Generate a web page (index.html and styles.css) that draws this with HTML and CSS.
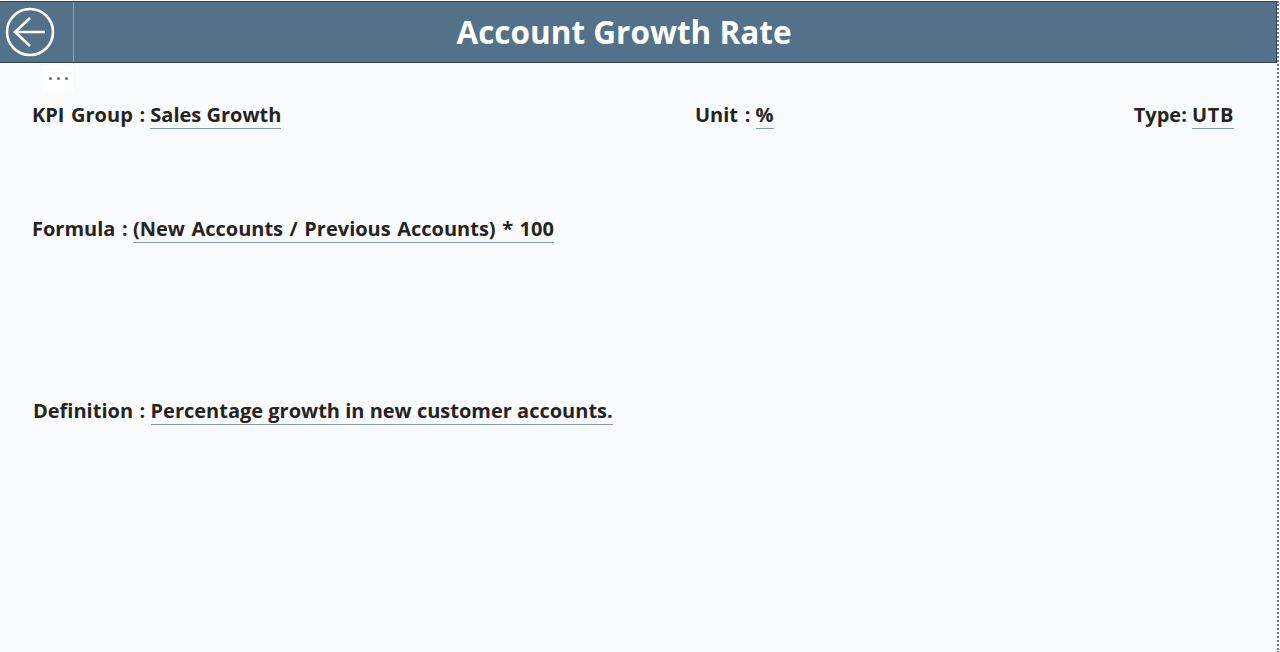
FILE: index.html
```html
<!DOCTYPE html>
<html lang="en">
<head>
<meta charset="utf-8">
<title>Account Growth Rate</title>
<link rel="stylesheet" href="styles.css">
</head>
<body>
<div class="page">
  <header class="banner">
    <button class="back" aria-label="Back">
      <svg width="50" height="50" viewBox="0 0 50 50" fill="none" stroke="#fff" stroke-width="2.6">
        <circle cx="25" cy="25" r="23"/>
        <path d="M10 25H40M25 11L10 25L25 39"/>
      </svg>
    </button>
    <h1 class="title">Account Growth Rate</h1>
  </header>
  <div class="more"><i></i><i></i><i></i></div>
  <div class="row-top">
    <p class="field"><span>KPI Group :</span> <u>Sales Growth</u></p>
    <p class="field"><span>Unit :</span> <u>%</u></p>
    <p class="field field-type"><span>Type:</span> <u>UTB</u></p>
  </div>
  <p class="field formula"><span>Formula :</span> <u>(New Accounts / Previous Accounts) * 100</u></p>
  <p class="field definition"><span>Definition :</span> <u>Percentage growth in new customer accounts.</u></p>
</div>
</body>
</html>
```
FILE: styles.css
```css
* { box-sizing: border-box; }
html, body { margin: 0; height: 100%; }
body { background: #fafbfd; font-family: "Open Sans", "Noto Sans", sans-serif; color: #252423; overflow: hidden; }
.page { height: 652px; width: 1279px; border-right: 2px dotted #777; }
.banner { display: flex; height: 62px; margin-top: 1px; background: #537188; border: 1px solid #2f4251; border-width: 1px 1px 1px 0; }
.back { width: 74px; padding: 0 0 0 5px; display: flex; align-items: center; background: #537188; border: 0; border-right: 1px solid #8ba0b0; }
.title { flex: 1; margin: 0; text-align: center; color: #fff; font-size: 31.5px; line-height: 60px; font-weight: 700; padding-right: 102px; }
.more { display: flex; justify-content: center; align-items: center; gap: 5px; width: 30px; height: 27px; margin: 2px 0 0 43px; background: #fff; }
.more i { width: 3px; height: 3px; border-radius: 50%; background: #666; }
.row-top { display: grid; grid-template-columns: 663px 1fr auto; padding: 0 43px 0 32px; margin-top: 9px; }
.field { margin: 0; font-size: 20px; line-height: 28px; font-weight: 700; white-space: nowrap; }
.field span { word-spacing: 1.4px; }
.field u { text-decoration: none; border-bottom: 1px solid #8a99a8; display: inline-block; line-height: 26px; }
.field-type u { letter-spacing: 0.6px; }
.formula u { word-spacing: 1.3px; }
.formula { margin: 86px 0 0 32px; }
.definition { margin: 154px 0 0 33px; }
```
